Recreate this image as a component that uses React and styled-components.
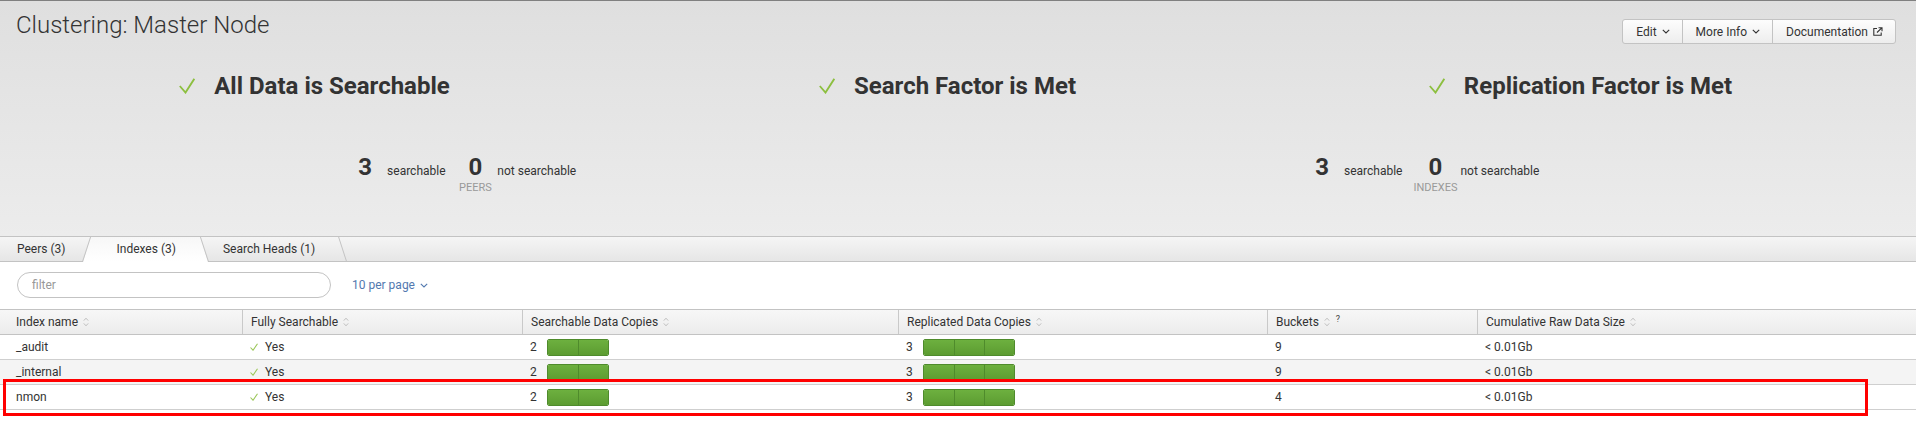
import React from "react";
import styled, { createGlobalStyle, css } from "styled-components";

const GlobalStyle = createGlobalStyle`
  html, body {
    margin: 0;
    padding: 0;
    background: #fff;
  }
  body {
    font-family: Roboto, "Liberation Sans", sans-serif;
    color: #333;
    font-size: 12px;
  }
  * { box-sizing: border-box; }
`;

const COLUMNS = "242px 280px 376px 369px 210px 1fr";

const Page = styled.div`
  position: relative;
  width: 1916px;
  min-height: 447px;
`;

const Header = styled.header`
  height: 237px;
  border-top: 1px solid #808080;
  border-bottom: 1px solid #c3c3c3;
  background: linear-gradient(#dfdfdf, #ececec);
  padding: 10px 20px 0 0;
`;

const TitleRow = styled.div`
  display: flex;
  justify-content: space-between;
  align-items: flex-start;
  padding-left: 16px;
`;

const Title = styled.h1`
  margin: 0;
  font-size: 24px;
  line-height: 28px;
  font-weight: 300;
  color: #333;
`;

const ButtonGroup = styled.div`
  display: flex;
  margin-top: 8px;
  height: 25px;
  border: 1px solid #c3c3c3;
  border-radius: 3px;
  background: linear-gradient(#fdfdfd, #ededed);
  overflow: hidden;
`;

const HeaderButton = styled.button`
  display: flex;
  align-items: center;
  gap: 5px;
  height: 23px;
  padding: 0 12px 0 13px;
  border: 0;
  border-left: 1px solid #c3c3c3;
  background: transparent;
  font-family: inherit;
  font-size: 12px;
  color: #333;
  &:first-child { border-left: 0; }
`;

const StatusRow = styled.div`
  display: grid;
  grid-template-columns: repeat(3, 1fr);
  margin-top: 27px;
  margin-right: -3px;
`;

const Status = styled.div`
  display: flex;
  align-items: center;
  justify-content: center;
  gap: 19px;
  height: 30px;
  margin-left: -4px;
`;

const StatusText = styled.span`
  font-size: 24px;
  line-height: 30px;
  font-weight: 700;
  color: #333;
`;

const StatsRow = styled.div`
  display: grid;
  grid-template-columns: 1fr 1fr;
  margin-top: 52px;
  margin-right: -3px;
`;

const StatGroup = styled.div`
  display: flex;
  align-items: baseline;
  justify-self: center;
  margin-left: ${(p) => p.$shift || 0}px;
`;

const StatNumberCol = styled.div`
  display: flex;
  flex-direction: column;
  align-items: center;
  margin-left: ${(p) => (p.$first ? 0 : 23)}px;
`;

const StatNumber = styled.span`
  font-size: 24px;
  line-height: 28px;
  font-weight: 700;
  color: #333;
`;

const StatCaption = styled.span`
  margin: 0 -12px;
  font-size: 11px;
  line-height: 13px;
  color: #999;
  text-transform: uppercase;
`;

const StatLabel = styled.span`
  margin-left: 15px;
  font-size: 12px;
  color: #333;
`;

const TabBar = styled.div`
  display: flex;
  height: 25px;
  border-bottom: 1px solid #c3c3c3;
  background: linear-gradient(#f5f5f5, #e6e6e6);
`;

const Tab = styled.div`
  position: relative;
  z-index: ${(p) => (p.$active ? 1 : 0)};
  padding: ${(p) => (p.$active ? "0 29px 0 31px" : "0 20px 0 18px")};
  font-size: 12px;
  line-height: 24px;
  color: #333;
  white-space: nowrap;

  &:first-child { padding-left: 17px; }
  &:last-child { padding-right: 28px; }

  ${(p) =>
    p.$active &&
    css`
      &::before,
      &::after {
        content: "";
        position: absolute;
        top: 0;
        bottom: -1px;
        width: calc(50% + 10px);
        z-index: -1;
        background: linear-gradient(#f7f7f7, #fff);
        transform-origin: center;
      }
      &::before {
        left: 0;
        border-left: 1px solid #c3c3c3;
        transform: skewX(-18deg);
      }
      &::after {
        right: 0;
        border-right: 1px solid #c3c3c3;
        transform: skewX(18deg);
      }
    `}

  ${(p) =>
    p.$divider &&
    css`
      &::after {
        content: "";
        position: absolute;
        top: 0;
        bottom: 0;
        right: 0;
        border-right: 1px solid #c3c3c3;
        transform: skewX(18deg);
        transform-origin: center;
      }
    `}
`;

const FilterRow = styled.div`
  display: flex;
  align-items: center;
  padding: 10px 17px 11px;
`;

const FilterInput = styled.input`
  width: 314px;
  height: 26px;
  padding: 0 14px;
  border: 1px solid #c3c3c3;
  border-radius: 13px;
  font-family: inherit;
  font-size: 12px;
  color: #333;
  outline: none;
  &::placeholder { color: #999; }
`;

const PerPage = styled.span`
  display: flex;
  align-items: center;
  gap: 5px;
  margin-left: 21px;
  font-size: 12px;
  color: #5379af;
`;

const HeaderRow = styled.div`
  display: grid;
  grid-template-columns: ${COLUMNS};
  height: 26px;
  border-top: 1px solid #c3c3c3;
  border-bottom: 1px solid #c3c3c3;
  background: linear-gradient(#f7f7f7, #ececec);
`;

const HeaderCell = styled.div`
  display: flex;
  align-items: center;
  padding: 0 8px;
  border-left: 1px solid #c9c9c9;
  white-space: nowrap;
  &:first-child {
    border-left: 0;
    padding-left: 16px;
  }
`;

const SortIcon = styled.svg`
  margin-left: 5px;
  flex: none;
`;

const Help = styled.span`
  margin-left: 6px;
  margin-top: -7px;
  font-size: 9px;
  color: #444;
`;

const Row = styled.div`
  display: grid;
  grid-template-columns: ${COLUMNS};
  height: 25px;
  border-bottom: 1px solid #cfcfcf;
  background: ${(p) => (p.$striped ? "#f4f4f4" : "#fff")};
`;

const Cell = styled.div`
  display: flex;
  align-items: center;
  padding: 0 8px;
  white-space: nowrap;
  &:first-child { padding-left: 16px; }
`;

const Count = styled.span`
  margin-right: 10px;
`;

const Bar = styled.div`
  display: flex;
  height: 17px;
  border: 1px solid #4f8b2c;
  border-radius: 2px;
  overflow: hidden;
`;

const BarSegment = styled.div`
  width: 30px;
  background: linear-gradient(#6db03f, #5c9c31);
  border-left: 1px solid #4f8b2c;
  &:first-child { border-left: 0; }
`;

const YesCheck = styled.svg`
  margin-right: 7px;
  flex: none;
`;

const Highlight = styled.div`
  position: absolute;
  left: 3px;
  top: 379px;
  width: 1865px;
  height: 37px;
  border: 3px solid #ff0000;
  pointer-events: none;
`;

const Chevron = ({ color = "#333" }) => (
  <svg width="8" height="5" viewBox="0 0 8 5">
    <path d="M0.8 0.8 L4 4 L7.2 0.8" fill="none" stroke={color} strokeWidth="1.1" />
  </svg>
);

const ExternalIcon = () => (
  <svg width="10" height="9" viewBox="0 0 10 9">
    <path d="M4 1.5 H0.8 V8.2 H8.2 V5.5" fill="none" stroke="#333" strokeWidth="1.1" />
    <path d="M4 5.5 L8.5 1.2 M5.5 0.8 H9 V4.3" fill="none" stroke="#333" strokeWidth="1.1" />
  </svg>
);

const BigCheck = () => (
  <svg width="16" height="16" viewBox="0 0 16 16">
    <path d="M0.8 8 L6.5 14.6 L15.3 0.8" fill="none" stroke="#8cbf3f" strokeWidth="1.8" />
  </svg>
);

const Sort = () => (
  <SortIcon width="6" height="10" viewBox="0 0 6 10">
    <path d="M0.8 3.6 L3 1.2 L5.2 3.6 M0.8 6.4 L3 8.8 L5.2 6.4" fill="none" stroke="#b9b9b9" strokeWidth="0.9" />
  </SortIcon>
);

const headings = ["All Data is Searchable", "Search Factor is Met", "Replication Factor is Met"];

const stats = [
  { caption: "Peers", shift: -15 },
  { caption: "Indexes", shift: 6 },
];

const tabs = [
  { label: "Peers (3)" },
  { label: "Indexes (3)", active: true },
  { label: "Search Heads (1)", divider: true },
];

const columns = [
  "Index name",
  "Fully Searchable",
  "Searchable Data Copies",
  "Replicated Data Copies",
  "Buckets",
  "Cumulative Raw Data Size",
];

const rows = [
  { name: "_audit", buckets: 9 },
  { name: "_internal", buckets: 9 },
  { name: "nmon", buckets: 4 },
];

const CopiesBar = ({ count }) => (
  <>
    <Count>{count}</Count>
    <Bar>
      {Array.from({ length: count }).map((_, i) => (
        <BarSegment key={i} />
      ))}
    </Bar>
  </>
);

export default function App() {
  return (
    <Page>
      <GlobalStyle />
      <Header>
        <TitleRow>
          <Title>Clustering: Master Node</Title>
          <ButtonGroup>
            <HeaderButton>
              Edit <Chevron />
            </HeaderButton>
            <HeaderButton>
              More Info <Chevron />
            </HeaderButton>
            <HeaderButton>
              Documentation <ExternalIcon />
            </HeaderButton>
          </ButtonGroup>
        </TitleRow>

        <StatusRow>
          {headings.map((h) => (
            <Status key={h}>
              <BigCheck />
              <StatusText>{h}</StatusText>
            </Status>
          ))}
        </StatusRow>

        <StatsRow>
          {stats.map((s) => (
            <StatGroup key={s.caption} $shift={s.shift}>
              <StatNumberCol $first>
                <StatNumber>3</StatNumber>
              </StatNumberCol>
              <StatLabel>searchable</StatLabel>
              <StatNumberCol>
                <StatNumber>0</StatNumber>
                <StatCaption>{s.caption}</StatCaption>
              </StatNumberCol>
              <StatLabel>not searchable</StatLabel>
            </StatGroup>
          ))}
        </StatsRow>
      </Header>

      <TabBar>
        {tabs.map((t) => (
          <Tab key={t.label} $active={t.active} $divider={t.divider}>
            {t.label}
          </Tab>
        ))}
      </TabBar>

      <FilterRow>
        <FilterInput placeholder="filter" />
        <PerPage>
          10 per page <Chevron color="#5379af" />
        </PerPage>
      </FilterRow>

      <HeaderRow>
        {columns.map((c) => (
          <HeaderCell key={c}>
            {c}
            <Sort />
            {c === "Buckets" && <Help>?</Help>}
          </HeaderCell>
        ))}
      </HeaderRow>

      {rows.map((r, i) => (
        <Row key={r.name} $striped={i === 1}>
          <Cell>{r.name}</Cell>
          <Cell>
            <YesCheck width="8" height="8" viewBox="0 0 8 8">
              <path d="M0.5 4.5 L3 7.2 L7.5 0.8" fill="none" stroke="#9cc75a" strokeWidth="1.1" />
            </YesCheck>
            Yes
          </Cell>
          <Cell>
            <CopiesBar count={2} />
          </Cell>
          <Cell>
            <CopiesBar count={3} />
          </Cell>
          <Cell>{r.buckets}</Cell>
          <Cell>&lt; 0.01Gb</Cell>
        </Row>
      ))}

      <Highlight />
    </Page>
  );
}
